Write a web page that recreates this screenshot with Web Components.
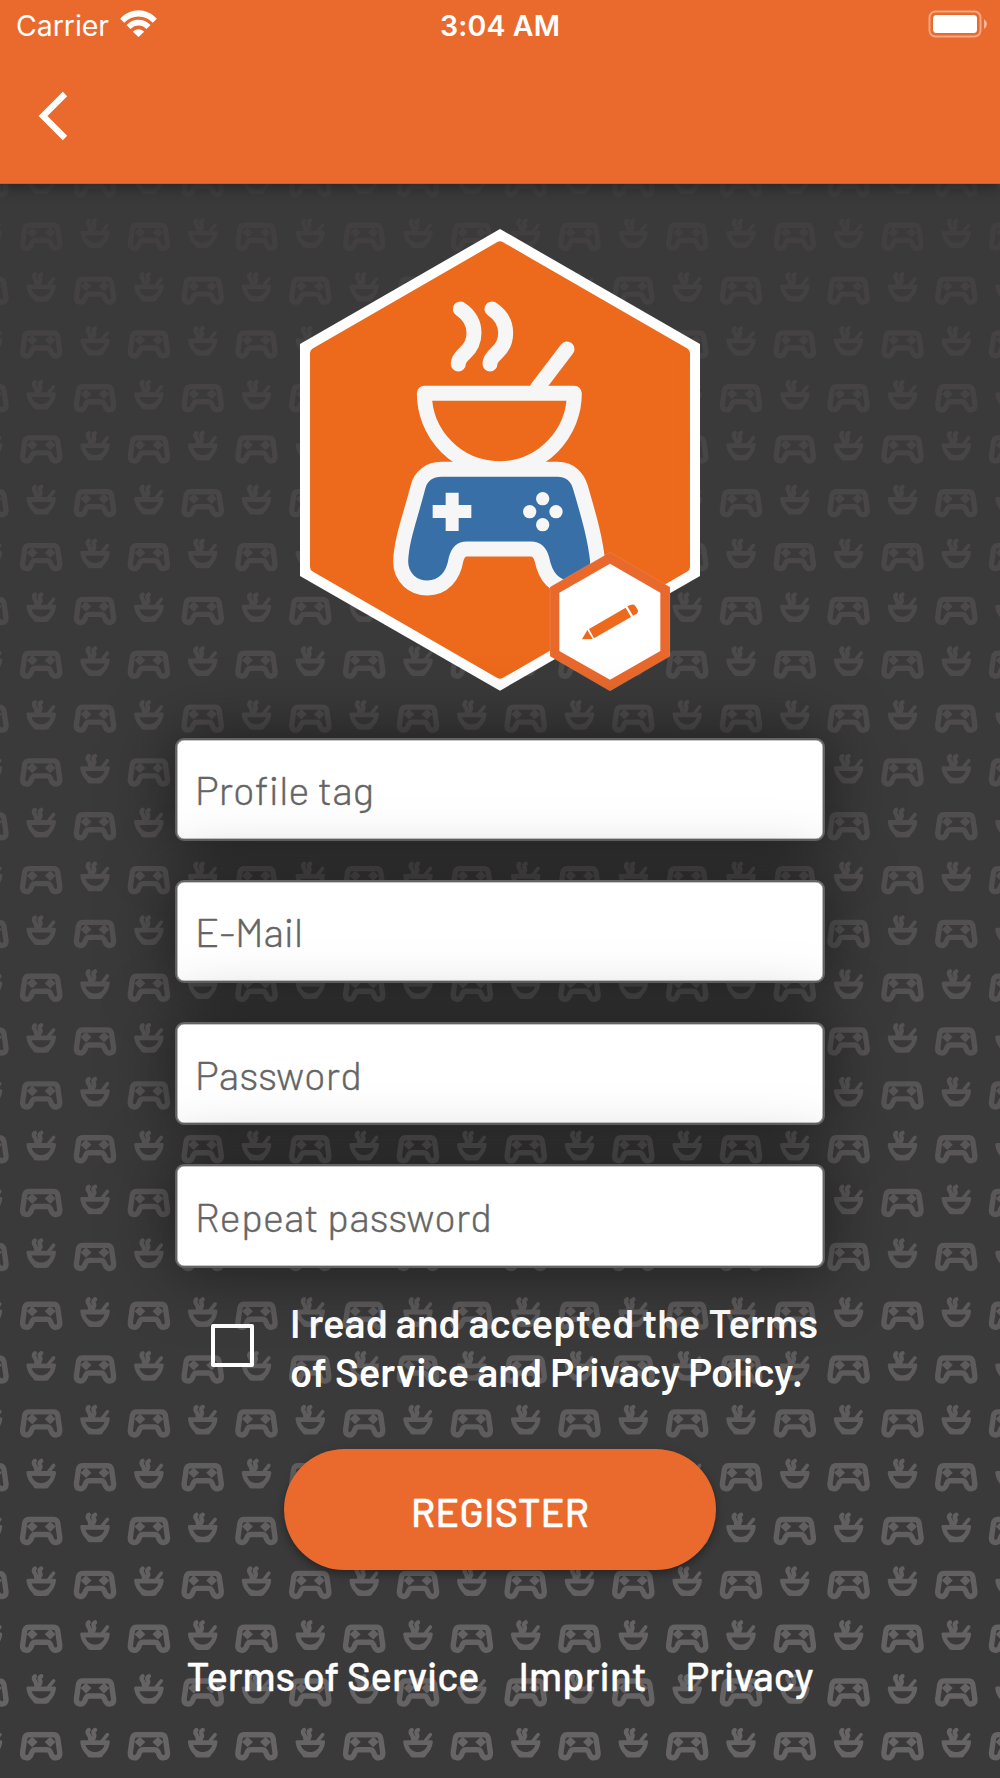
<!DOCTYPE html>
<html lang="en">
<head>
<meta charset="utf-8">
<title>Register</title>
<style>
	html, body { margin: 0; padding: 0; }
	body {
		background: #3a3a3a;
		font-family: Barlow, Roboto, "Liberation Sans", sans-serif;
		color: #fff;
	}
</style>
</head>
<body>
<register-screen></register-screen>

<script>
// Inline text set to a given advance width through letter spacing.
class FitLabel extends HTMLElement {
	constructor() {
		super();
		this.attachShadow({ mode: "open" });
	}

	connectedCallback() {
		this.shadowRoot.innerHTML = `
      <style>
        :host { display: block; white-space: nowrap; }
        span { display: inline-block; }
      </style>
      <span></span>
    `;
		const span = this.shadowRoot.querySelector("span");
		const text = this.getAttribute("text") || "";
		span.textContent = text;
		const target = Number(this.getAttribute("width"));
		if (!target) {
			return;
		}
		const gap = (target - span.getBoundingClientRect().width) / Math.max(1, text.length - 1);
		span.style.letterSpacing = `${gap.toFixed(3)}px`;
		span.style.marginRight = `${(-gap).toFixed(3)}px`;
	}
}
customElements.define("fit-label", FitLabel);

class StatusBar extends HTMLElement {
	constructor() {
		super();
		this.attachShadow({ mode: "open" });
		this.shadowRoot.innerHTML = `
      <style>
        :host {
          display: grid;
          grid-template-columns: 1fr auto 1fr;
          align-items: center;
          height: 50px;
          padding: 0 12px;
          box-sizing: border-box;
          font: 400 28.5px/50px Inter, "Liberation Sans", sans-serif;
        }
        .left { display: flex; align-items: center; gap: 11px; padding-left: 4px; }
        .left svg { margin-bottom: 4px; }
        fit-label { padding-top: 1px; }
        .time { font-weight: 600; }
        .battery { justify-self: end; margin-bottom: 3px; }
        svg { display: block; }
      </style>
      <div class="left">
        <fit-label text="Carrier" width="93"></fit-label>
        <svg width="37" height="27" viewBox="0 0 110 81" fill="#fff">
          <path d="M0 26C31-8 79-8 110 26L98 38C74 13 36 13 12 38Z"/>
          <path d="M19 45C39 24 71 24 91 45L79 57C64 43 46 43 31 57Z"/>
          <path d="M38 65C47 55 63 55 72 65L55 81Z"/>
        </svg>
      </div>
      <fit-label class="time" text="3:04 AM" width="120"></fit-label>
      <svg class="battery" width="60" height="28" viewBox="0 0 60 28">
        <rect x="1.5" y="1.5" width="51" height="25" rx="6" fill="none" stroke="#fff" stroke-opacity=".42" stroke-width="2"/>
        <rect x="5" y="5" width="44" height="18" rx="3.5" fill="#fff"/>
        <path d="M56 9Q62 14 56 19Z" fill="#fff" fill-opacity=".5"/>
      </svg>
    `;
	}
}
customElements.define("status-bar", StatusBar);

class AppHeader extends HTMLElement {
	constructor() {
		super();
		this.attachShadow({ mode: "open" });
		this.shadowRoot.innerHTML = `
      <style>
        :host {
          display: flex;
          flex-direction: column;
          height: 184px;
          background: #ea692c;
          border-bottom: 1px solid #c9602f;
          box-sizing: border-box;
          box-shadow: 0 4px 14px rgba(0, 0, 0, .35);
        }
        button {
          margin: 41px 0 0 38px;
          padding: 0;
          width: 30px;
          height: 50px;
          border: 0;
          background: none;
        }
        svg { display: block; }
      </style>
      <status-bar></status-bar>
      <button aria-label="Back">
        <svg width="30" height="50" viewBox="0 0 30 50" fill="none" stroke="#fff" stroke-width="6.2">
          <path d="M27 3L5 25L27 47"/>
        </svg>
      </button>
    `;
	}
}
customElements.define("app-header", AppHeader);

// Repeating rows of gamepads and soup bowls that get lighter towards the bottom.
class PatternBackdrop extends HTMLElement {
	constructor() {
		super();
		this.attachShadow({ mode: "open" });
	}

	connectedCallback() {
		const step = 53.83;
		let body = "";
		for (let row = -1; row <= 29; row++) {
			let y = 222.7 + row * step;
			if (row >= 4) y -= 2.7;
			if (row >= 20) y += 5;
			const shade = Math.round(64 + (row + 1) * 1.32);
			const color = `rgb(${shade},${shade - 2},${shade - 2})`;
			const odd = Math.abs(row) % 2;
			for (let col = -1; col <= 18; col++) {
				const x = 41.2 + col * step;
				const id = (Math.abs(col) % 2) === odd ? "pad" : "bowl";
				body += `<use href="#${id}" x="${x.toFixed(1)}" y="${y.toFixed(1)}" color="${color}"/>`;
			}
		}
		this.shadowRoot.innerHTML = `
      <style>
        :host { display: block; }
        svg { display: block; }
      </style>
      <svg width="1000" height="1778" viewBox="0 0 1000 1778" aria-hidden="true">
        <defs>
          <g id="pad" fill="none" stroke="currentColor">
            <path stroke-width="5.4" stroke-linejoin="round" d="M-12 2.6H12Q15.6 2.6 16.5 6L18.6 20.5C19.1 26.5 12.5 27 10.5 23L9 19.5Q8 17.6 6 17.6H-6Q-8 17.6-9 19.5L-10.5 23C-12.5 27-19.1 26.5-18.6 20.5L-16.5 6Q-15.6 2.6-12 2.6Z"/>
            <path fill="currentColor" stroke="none" d="M-9 4.5L-3.5 9.7L-9 15L-14.5 9.7ZM9 4.5L14.5 9.7L9 15L3.5 9.7Z"/>
          </g>
          <g id="bowl">
            <path fill="currentColor" fill-rule="evenodd" d="M-13.5 8H13.5Q15 8 14.8 10C14.2 15.5 11.5 19.5 8.5 22.5Q7.5 25.3 5 25.3H-5Q-7.5 25.3-8.5 22.5C-11.5 19.5-14.2 15.5-14.8 10Q-15 8-13.5 8ZM-9.5 12.8C-8 17.5-4.5 19.8 0 19.8S8 17.5 9.5 12.8Z"/>
            <path fill="none" stroke="currentColor" stroke-width="4.4" stroke-linecap="round" d="M-6.300-2.200C-8-1-7.500 1-6.300 2.500S-4.800 5.500-4.800 7.500M0-2.200C-2.500-1-1.700 1-.8 2.500S-1.200 5-2.300 7.500"/>
            <path fill="none" stroke="currentColor" stroke-width="3.6" stroke-linecap="round" d="M7.500 8.500L12.400 2.400"/>
          </g>
        </defs>
        ${body}
      </svg>
    `;
	}
}
customElements.define("pattern-backdrop", PatternBackdrop);

class ProfileAvatar extends HTMLElement {
	constructor() {
		super();
		this.attachShadow({ mode: "open" });
		this.shadowRoot.innerHTML = `
      <style>
        :host { display: block; width: 400px; height: 462px; }
        svg { display: block; }
      </style>
      <svg width="400" height="462" viewBox="60 58 1200 1386">
        <path fill="#fff" d="M660 58L1260 403V1099L660 1443L60 1099V403Z"/>
        <path fill="#ed691b" stroke="#ed691b" stroke-width="32" stroke-linejoin="round" d="M660 111L1214 430V1072L660 1391L106 1072V430Z"/>
        <g fill="none" stroke="#f6f6f6" stroke-width="45" stroke-linecap="round" stroke-linejoin="round">
          <path id="steam" d="M541 298C571 318 582 342 582 370C582 398 571 416 555 430Q535 448 535 463"/>
          <use href="#steam" x="95"/>
          <path d="M861 418L772 535"/>
          <path d="M433 551H883A225 226 0 0 1 433 551Z"/>
          <path fill="#386fa6" d="M485 779H832C872 779 893 805 901 832C925 915 945 980 953 1055C953 1105 915 1135 872 1135C825 1135 796 1100 786 1050Q778 1018 752 1018H560Q536 1018 528 1050C520 1100 490 1135 442 1135C400 1135 362 1105 362 1055C364 990 390 925 414 832C422 800 448 779 485 779Z"/>
        </g>
        <g fill="#f6f6f6">
          <path d="M497 849H536V886H574V925H536V964H497V925H458V886H497Z"/>
          <circle cx="788" cy="867" r="20"/>
          <circle cx="749" cy="906" r="20"/>
          <circle cx="828" cy="906" r="20"/>
          <circle cx="788" cy="945" r="20"/>
        </g>
        <path fill="#e9692c" stroke="#fff" stroke-opacity=".15" stroke-width="2" d="M990 1028L1170 1132V1340L990 1444L810 1340V1132Z"/>
        <path fill="#fff" d="M990 1062L1141 1149V1324L990 1410L838 1324V1149Z"/>
        <g fill="#ed691b">
          <path d="M906 1289L922 1261L938 1288Z"/>
          <path d="M927 1258L1037 1194L1053 1222L942 1286Z"/>
          <path d="M1042 1190L1051 1186Q1061 1182 1066 1189L1073 1200Q1076 1208 1068 1213L1059 1218Z"/>
        </g>
      </svg>
    `;
	}
}
customElements.define("profile-avatar", ProfileAvatar);

class TextField extends HTMLElement {
	constructor() {
		super();
		this.attachShadow({ mode: "open" });
	}

	connectedCallback() {
		this.shadowRoot.innerHTML = `
      <style>
        :host {
          display: flex;
          align-items: center;
          position: relative;
          box-sizing: border-box;
          height: 103.3px;
          padding: 0 0 0 18px;
          border: 2px solid #636363;
          border-radius: 9px;
          background: #fff;
          box-shadow: inset 0 0 0 .6px #8c8c8c, 0 0 68px rgba(0, 0, 0, .52);
          color: #656565;
          font-size: 40px;
          font-weight: 300;
          -webkit-text-stroke: .35px #656565;
        }
      </style>
      <fit-label text="${this.getAttribute("label")}" width="${this.getAttribute("label-width")}"></fit-label>
    `;
	}
}
customElements.define("text-field", TextField);

class TermsCheck extends HTMLElement {
	constructor() {
		super();
		this.attachShadow({ mode: "open" });
		this.shadowRoot.innerHTML = `
      <style>
        :host { display: flex; align-items: center; gap: 36px; }
        .box {
          width: 43px;
          height: 43px;
          box-sizing: border-box;
          border: 4px solid #fff;
          border-radius: 2px;
        }
        .text { padding-top: 2px; font-size: 40px; font-weight: 600; line-height: 48.4px; }
      </style>
      <div class="box" role="checkbox" aria-checked="false"></div>
      <div class="text"><slot></slot></div>
    `;
	}
}
customElements.define("terms-check", TermsCheck);

class PillButton extends HTMLElement {
	constructor() {
		super();
		this.attachShadow({ mode: "open" });
		this.shadowRoot.innerHTML = `
      <style>
        :host {
          display: flex;
          align-items: center;
          justify-content: center;
          width: 432px;
          height: 121px;
          box-sizing: border-box;
          padding-top: 2px;
          border-radius: 61px;
          background: #ea692c;
          box-shadow: 0 4px 8px rgba(0, 0, 0, .35);
          font-size: 39.5px;
          font-weight: 500;
          -webkit-text-stroke: .3px #fff;
        }
      </style>
      <slot></slot>
    `;
	}
}
customElements.define("pill-button", PillButton);

class RegisterScreen extends HTMLElement {
	constructor() {
		super();
		this.attachShadow({ mode: "open" });
		this.shadowRoot.innerHTML = `
      <style>
        :host {
          display: block;
          position: relative;
          width: 1000px;
          height: 1778px;
          overflow: hidden;
          background: #3a3a3a;
        }
        pattern-backdrop { position: absolute; inset: 0; }
        .page { position: relative; display: flex; flex-direction: column; }
        main { display: flex; flex-direction: column; align-items: center; padding-top: 45px; }
        .fields {
          display: grid;
          gap: 39px;
          width: 650px;
          margin-top: 46.5px;
        }
        terms-check { margin: 28.7px 0 0 29px; }
        pill-button { margin-top: 54px; }
        nav {
          display: flex;
          width: 627px;
          justify-content: space-between;
          margin-top: 81px;
          font-size: 40px;
          line-height: 48px;
          font-weight: 500;
          -webkit-text-stroke: .3px #fff;
        }
      </style>
      <pattern-backdrop></pattern-backdrop>
      <div class="page">
        <app-header></app-header>
        <main>
          <profile-avatar></profile-avatar>
          <div class="fields">
            <text-field label="Profile tag" label-width="179"></text-field>
            <text-field label="E-Mail" label-width="108"></text-field>
            <text-field label="Password" label-width="167"></text-field>
            <text-field label="Repeat password" label-width="297"></text-field>
          </div>
          <terms-check>
            <fit-label text="I read and accepted the Terms" width="528"></fit-label>
            <fit-label text="of Service and Privacy Policy." width="513"></fit-label>
          </terms-check>
          <pill-button><fit-label text="REGISTER" width="178"></fit-label></pill-button>
          <nav>
            <fit-label text="Terms of Service" width="293"></fit-label>
            <fit-label text="Imprint" width="128"></fit-label>
            <fit-label text="Privacy" width="128"></fit-label>
          </nav>
        </main>
      </div>
    `;
	}
}
customElements.define("register-screen", RegisterScreen);
</script>
</body>
</html>
